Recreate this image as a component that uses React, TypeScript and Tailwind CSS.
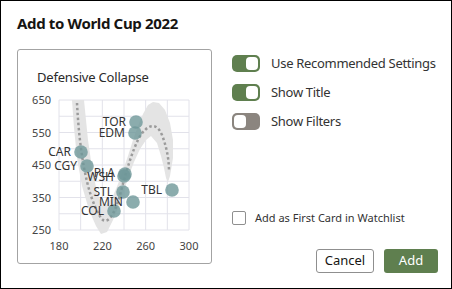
import React from "react";

const font = { fontFamily: '"Noto Sans", "Open Sans", sans-serif' };

const points: { id: string; cx: number; cy: number; ly?: number }[] = [
  { id: "TOR", cx: 119, cy: 74 },
  { id: "EDM", cx: 118, cy: 85 },
  { id: "CAR", cx: 64, cy: 104 },
  { id: "CGY", cx: 70, cy: 118 },
  { id: "PLA", cx: 108, cy: 126, ly: 125 },
  { id: "WSH", cx: 107, cy: 128, ly: 129 },
  { id: "STL", cx: 106, cy: 144 },
  { id: "MIN", cx: 116, cy: 154 },
  { id: "COL", cx: 97, cy: 163 },
  { id: "TBL", cx: 155, cy: 142 },
];

const band =
  "M55,52 L57,80 L60,110 L65,138 L72,162 L79,178 L84,186 L90,184 L96,172 L101,160 L106,146 L111,130 L117,114 L123,101 L129,92 L134,88 L140,95 L144,108 L147,120 L149,130 L151,134 L153,128 L156,110 L156,92 L153,75 L148,62 L142,55 L136,54 L131,57 L126,66 L121,78 L116,92 L111,108 L106,122 L101,136 L96,148 L90,156 L85,158 L80,144 L75,120 L71,92 L67,52 Z";

const curve =
  "M60,55 C62,95 68,145 84,170 C90,178 97,168 103,147 C108,128 118,90 128,82 C133,77 140,75 145,87 C150,100 152,112 152,124";

function Chart() {
  const xs = [42, 63.67, 85.33, 107, 128.67, 150.33, 172];
  const ys = [52, 68.25, 84.5, 100.75, 117, 133.25, 149.5, 165.75, 182];
  return (
    <svg width="193" height="176" viewBox="0 0 193 176">
      <g transform="translate(-1,-38)">
        {xs.map((x) => (
          <line key={"x" + x} x1={x} x2={x} y1={52} y2={182} stroke="#e2e2ea" strokeWidth="1" />
        ))}
        {ys.map((y) => (
          <line key={"y" + y} x1={42} x2={172} y1={y} y2={y} stroke="#e2e2ea" strokeWidth="1" />
        ))}
        <path d={band} fill="#e4e4e4" />
        <path d={curve} fill="none" stroke="#9b9b9b" strokeWidth="2.5" strokeDasharray="2.5 2.5" />
        {points.map((p) => (
          <circle key={p.id} cx={p.cx} cy={p.cy} r="6.8" fill="#6e9799" fillOpacity="0.8" />
        ))}
        {points.map((p) => (
          <text
            key={"t" + p.id}
            x={p.cx - 10}
            y={(p.ly ?? p.cy) + 4}
            textAnchor="end"
            fontSize="12"
            fill="#333"
            fontFamily='"Noto Sans", sans-serif'
          >
            {p.id}
          </text>
        ))}
        {[
          ["650", 52],
          ["550", 84.5],
          ["450", 117],
          ["350", 149.5],
          ["250", 182],
        ].map(([t, y]) => (
          <text key={t as string} x={34} y={(y as number) + 4} textAnchor="end" fontSize="11" fill="#444" fontFamily='"Noto Sans", sans-serif'>
            {t}
          </text>
        ))}
        {[
          ["180", 42],
          ["220", 85.33],
          ["260", 128.67],
          ["300", 172],
        ].map(([t, x]) => (
          <text key={t as string} x={x as number} y={202} textAnchor="middle" fontSize="11" fill="#444" fontFamily='"Noto Sans", sans-serif'>
            {t}
          </text>
        ))}
      </g>
    </svg>
  );
}

function Toggle({ on }: { on: boolean }) {
  return (
    <div
      className={
        "w-[28px] h-[17px] rounded-[5px] flex items-center px-[2px] shrink-0 " +
        (on ? "bg-[#5f7f4f] justify-end" : "bg-[#8b857f] justify-start")
      }
    >
      <div className="w-[12px] h-[13px] rounded-[4px] bg-white" />
    </div>
  );
}

export default function App() {
  return (
    <div
      className="w-[452px] h-[289px] border border-black bg-white flex flex-col pl-[16px] pr-[13px] text-[#161513]"
      style={font}
    >
      <div className="pt-[12px] text-[15px] font-bold leading-[20px] tracking-[-0.35px]">Add to World Cup 2022</div>
      <div className="flex mt-[16px]">
        <div className="w-[195px] h-[215px] border border-[#a3a3a3] rounded-[3px] flex flex-col shrink-0">
          <div className="pt-[18px] pl-[19px] text-[13px] leading-[18px] text-[#2a2a2a] tracking-[-0.2px]">Defensive Collapse</div>
          <Chart />
        </div>
        <div className="flex flex-col flex-1 ml-[20px]">
          <div className="flex flex-col gap-[12px] mt-[6px]">
            {[
              ["Use Recommended Settings", true],
              ["Show Title", true],
              ["Show Filters", false],
            ].map(([label, on]) => (
              <div key={label as string} className="flex items-center gap-[11px] h-[17px]">
                <Toggle on={on as boolean} />
                <span className="text-[13px] text-[#333] whitespace-nowrap tracking-[-0.3px]">{label as string}</span>
              </div>
            ))}
          </div>
          <div className="flex items-center gap-[9px] mt-[80px]">
            <div className="w-[14px] h-[14px] border border-[#8f8f8f] rounded-[2px] bg-white" />
            <span className="text-[11px] text-[#333] whitespace-nowrap">Add as First Card in Watchlist</span>
          </div>
          <div className="flex justify-end gap-[10px] mt-[22px]">
            <button className="w-[58px] h-[24px] border border-[#8f8f8f] rounded-[3px] bg-white text-[13px] text-[#161513] leading-none">
              Cancel
            </button>
            <button className="w-[54px] h-[24px] rounded-[3px] bg-[#5f7f4f] text-[13px] text-white leading-none">
              Add
            </button>
          </div>
        </div>
      </div>
    </div>
  );
}
